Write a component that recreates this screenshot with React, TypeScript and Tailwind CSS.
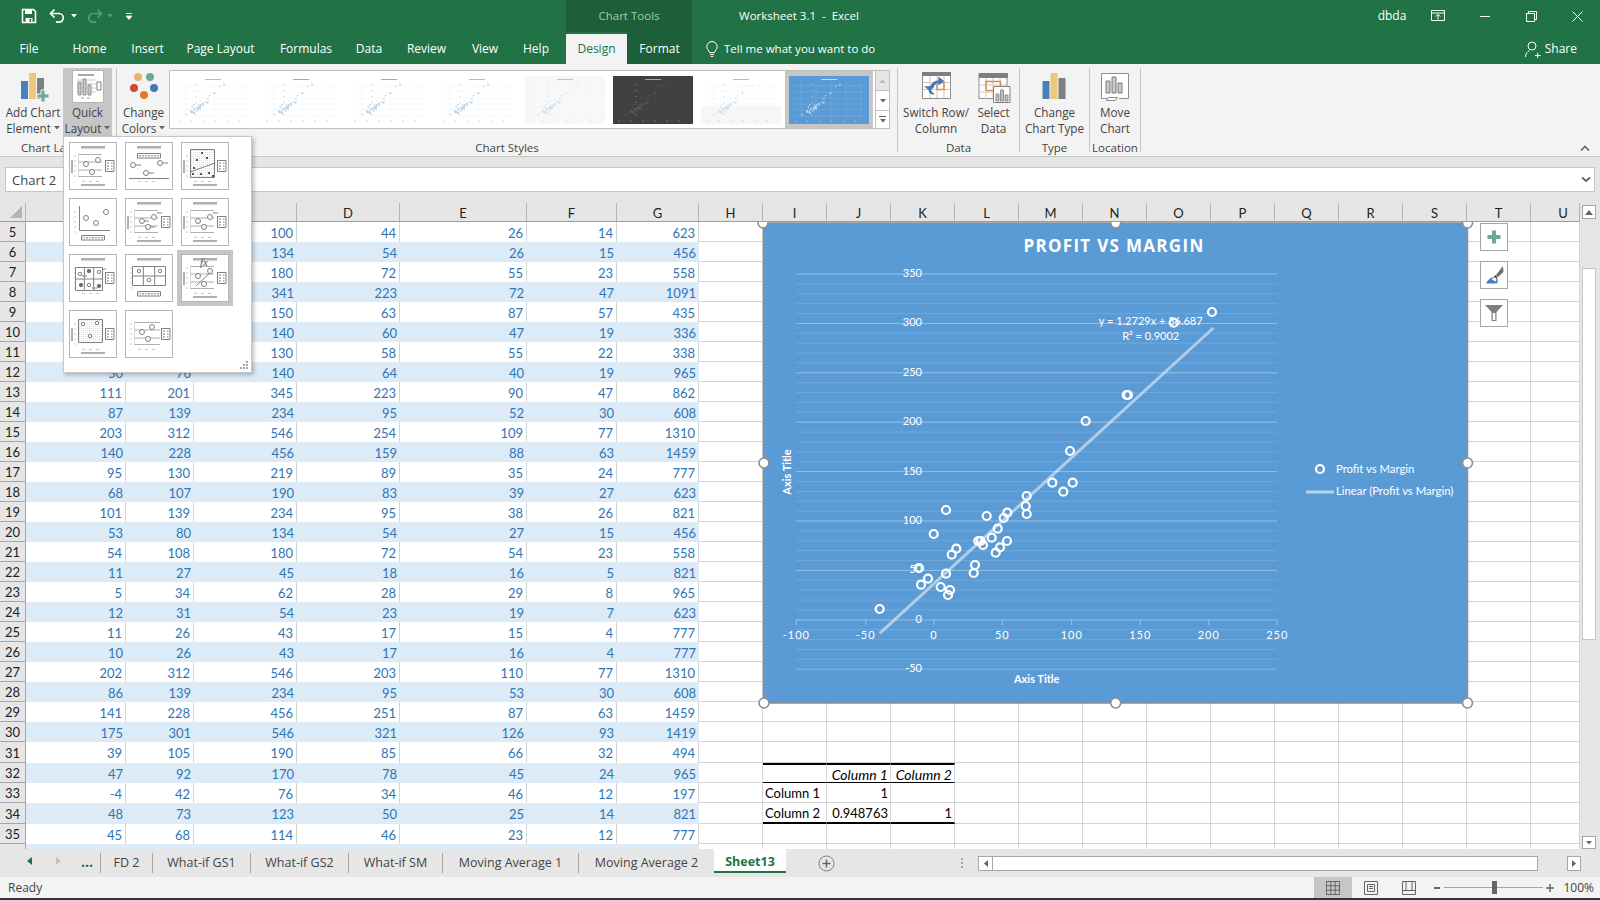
import type { ReactNode } from 'react';

const COLS = [100, 68, 103, 103, 127, 90, 82];
const LETTERS = 'ABCDEFG'.split('');

const WIDTH_CLASS: Record<number, string> = {
  100: 'w-[100px]',
  68: 'w-[68px]',
  103: 'w-[103px]',
  127: 'w-[127px]',
  90: 'w-[90px]',
  82: 'w-[82px]',
};

const GRID_COLS = ['H', 'I', 'J', 'K', 'L', 'M', 'N', 'O', 'P', 'Q', 'R', 'S', 'T', 'U'];

// rows 5..36, columns A..G. The first ones sit behind the quick layout menu
const DATA: (string | number)[][] = [
  ['', '', 100, 44, 26, 14, 623],
  ['', '', 134, 54, 26, 15, 456],
  ['', '', 180, 72, 55, 23, 558],
  ['', '', 341, 223, 72, 47, 1091],
  ['', '', 150, 63, 87, 57, 435],
  ['', '', 140, 60, 47, 19, 336],
  ['', '', 130, 58, 55, 22, 338],
  [50, 76, 140, 64, 40, 19, 965],
  [111, 201, 345, 223, 90, 47, 862],
  [87, 139, 234, 95, 52, 30, 608],
  [203, 312, 546, 254, 109, 77, 1310],
  [140, 228, 456, 159, 88, 63, 1459],
  [95, 130, 219, 89, 35, 24, 777],
  [68, 107, 190, 83, 39, 27, 623],
  [101, 139, 234, 95, 38, 26, 821],
  [53, 80, 134, 54, 27, 15, 456],
  [54, 108, 180, 72, 54, 23, 558],
  [11, 27, 45, 18, 16, 5, 821],
  [5, 34, 62, 28, 29, 8, 965],
  [12, 31, 54, 23, 19, 7, 623],
  [11, 26, 43, 17, 15, 4, 777],
  [10, 26, 43, 17, 16, 4, 777],
  [202, 312, 546, 203, 110, 77, 1310],
  [86, 139, 234, 95, 53, 30, 608],
  [141, 228, 456, 251, 87, 63, 1459],
  [175, 301, 546, 321, 126, 93, 1419],
  [39, 105, 190, 85, 66, 32, 494],
  [47, 92, 170, 78, 45, 24, 965],
  [-4, 42, 76, 34, 46, 12, 197],
  [48, 73, 123, 50, 25, 14, 821],
  [45, 68, 114, 46, 23, 12, 777],
  ['', '', '', '', '', '', ''],
];

// scatter points in page pixels
const POINTS = [
  [1212, 312], [1173.7, 322.7], [1126.7, 395], [1128, 395], [1085.7, 421], [1070, 451],
  [1052.3, 482.7], [1072.7, 482.7], [1063.3, 491.7], [1026.7, 496], [1025.7, 506], [1026.7, 514],
  [946, 510], [986.7, 516], [1007.3, 512.7], [1003.7, 518], [997.7, 528.7], [933.7, 534],
  [991.7, 537.7], [1007, 541], [978.3, 541], [980.7, 541], [983, 545], [956.3, 548.7],
  [951.7, 554.7], [1000, 547.3], [995.7, 552.7], [975, 565], [973.7, 573], [919, 568],
  [946, 573.7], [928, 578.7], [921, 584.7], [940.7, 587], [950, 590], [948, 595], [879.7, 609],
];

function Caret({ color = '#666' }: { color?: string }) {
  return (
    <svg width="6" height="4" viewBox="0 0 6 4" className="inline-block">
      <path d="M0 0h6L3 3.5z" fill={color} />
    </svg>
  );
}

function TitleBar() {
  return (
    <div className="flex h-[32px] bg-[#217346] text-[11.5px] text-white">
      <div className="flex w-[566px] items-center">
        <svg width="16" height="16" viewBox="0 0 16 16" className="ml-[21px]">
          <path d="M1.5 1.5h11l2 2v11h-13z" fill="none" stroke="#fff" strokeWidth="1.6" />
          <path d="M4 1.5h7v4.5H4zM4.5 10h7v4.5h-7z" fill="#fff" />
          <path d="M8.5 11h1.6v3H8.5z" fill="#217346" />
        </svg>
        <svg width="18" height="16" viewBox="0 0 18 16" className="ml-[12px]">
          <path d="M5.5 1.5 1.5 5.5l4 4" fill="none" stroke="#fff" strokeWidth="1.7" />
          <path d="M2 5.5h8a4.3 4.3 0 0 1 0 8.6H7" fill="none" stroke="#fff" strokeWidth="1.7" />
        </svg>
        <span className="ml-[4px] flex"><Caret color="#fff" /></span>
        <svg width="18" height="16" viewBox="0 0 18 16" className="ml-[8px] opacity-40">
          <path d="M12.5 1.5l4 4-4 4" fill="none" stroke="#b7d5c3" strokeWidth="1.7" />
          <path d="M16 5.5H8a4.3 4.3 0 0 0 0 8.6h3" fill="none" stroke="#b7d5c3" strokeWidth="1.7" />
        </svg>
        <span className="ml-[4px] flex opacity-40"><Caret color="#b7d5c3" /></span>
        <svg width="6" height="7" viewBox="0 0 6 7" className="ml-[13px]">
          <path d="M0 .5h6M0 3h6l-3 3.5z" fill="#fff" stroke="#fff" strokeWidth=".8" />
        </svg>
      </div>
      <div className="flex w-[126px] items-center justify-center bg-[#1c5f39] text-[#a8cbb6]">Chart Tools</div>
      <div className="flex w-[214px] items-center justify-center whitespace-pre">Worksheet 3.1  -  Excel</div>
      <div className="ml-auto flex">
        <div className="flex w-[44px] items-center justify-center text-[12px]">dbda</div>
        <div className="flex w-[48px] items-center justify-center">
          <svg width="14" height="12" viewBox="0 0 14 12">
            <path d="M.5.5h13v10H.5zM.5 3h13M7 9.5V4.5M4.8 6.5 7 4.3l2.2 2.2" fill="none" stroke="#fff" />
          </svg>
        </div>
        <div className="flex w-[46px] items-center justify-center">
          <div className="h-px w-[10px] bg-white" />
        </div>
        <div className="flex w-[46px] items-center justify-center">
          <svg width="11" height="11" viewBox="0 0 11 11">
            <path d="M.5 2.5h8v8h-8zM2.5 2.5v-2h8v8h-2" fill="none" stroke="#fff" />
          </svg>
        </div>
        <div className="flex w-[46px] items-center justify-center">
          <svg width="11" height="11" viewBox="0 0 11 11">
            <path d="M.5.5l10 10M10.5.5l-10 10" fill="none" stroke="#fff" />
          </svg>
        </div>
      </div>
    </div>
  );
}

function TabBar() {
  const tabs = [
    ['File', 'w-[58px]'],
    ['Home', 'w-[63px]'],
    ['Insert', 'w-[53px]'],
    ['Page Layout', 'w-[93px]'],
    ['Formulas', 'w-[78px]'],
    ['Data', 'w-[48px]'],
    ['Review', 'w-[67px]'],
    ['View', 'w-[50px]'],
    ['Help', 'w-[52px]'],
  ];
  return (
    <div className="flex h-[32px] bg-[#217346] text-[12px] text-white">
      {tabs.map(([name, w]) => (
        <div key={name} className={`flex items-center justify-center pt-[2px] ${w}`}>{name}</div>
      ))}
      <div className="w-[4px]" />
      <div className="mt-[2px] flex w-[61px] items-center justify-center bg-[#f3f3f3] text-[#217346]">Design</div>
      <div className="flex w-[65px] items-center justify-center bg-[#1c5f39] pt-[2px]">Format</div>
      <div className="ml-[14px] flex items-center pt-[2px]">
        <svg width="12" height="17" viewBox="0 0 12 17">
          <path d="M3.5 11.5C3 9.5.8 8.5.8 5.7a5.2 5.2 0 0 1 10.4 0c0 2.8-2.2 3.8-2.7 5.8zM4 13.500h4M4.800 15.500h2.400" fill="none" stroke="#fff" />
        </svg>
        <span className="ml-[6px] text-[11.5px]">Tell me what you want to do</span>
      </div>
      <div className="ml-auto flex items-center pr-[23px] pt-[2px]">
        <svg width="16" height="17" viewBox="0 0 16 17">
          <circle cx="7" cy="5" r="4" fill="none" stroke="#fff" />
          <path d="M.5 16c0-3.500 2-5.500 4-6.300M10 14.500h5.500M12.700 11.700v5.500" fill="none" stroke="#fff" />
        </svg>
        <span className="ml-[4px]">Share</span>
      </div>
    </div>
  );
}

function RibbonButton({ w, icon, lines, caret, active }: { w: string; icon: ReactNode; lines: string[]; caret?: boolean; active?: boolean }) {
  return (
    <div className={`flex h-[72px] flex-col items-center ${w} ${active ? 'bg-[#c6c6c6]' : ''}`}>
      <div className="flex h-[36px] items-start justify-center pt-[2px]">{icon}</div>
      <div className="text-center text-[11.7px] leading-[16px] text-[#444] whitespace-nowrap">
        <div>{lines[0]}</div>
        <div className="flex items-center justify-center gap-[3px]">
          <span>{lines[1]}</span>
          {caret && <Caret />}
        </div>
      </div>
    </div>
  );
}

function Group({ w, label, children }: { w: string; label: string; children: ReactNode }) {
  return (
    <div className={`flex h-[88px] flex-col ${w}`}>
      <div className="flex h-[72px]">{children}</div>
      <div className="flex h-[16px] items-center justify-center text-[11.5px] text-[#444] whitespace-nowrap">{label}</div>
    </div>
  );
}

function Separator() {
  return <div className="h-[84px] w-px bg-[#c6c6c6]" />;
}

const AddChartIcon = (
  <svg width="32" height="34" viewBox="0 0 32 34">
    <path d="M4 11h7v18H4z" fill="#4a7fb8" />
    <path d="M12 3h7v26h-7z" fill="#eec77f" />
    <path d="M20 8h7v21h-7z" fill="#7f7f7f" />
    <path d="M24 20h4v4h4v4h-4v4h-4v-4h-4v-4h4z" fill="#6fa894" stroke="#f3f3f3" />
  </svg>
);

const QuickLayoutIcon = (
  <svg width="32" height="33" viewBox="0 0 32 33">
    <path d="M.5.5h31v32H.5z" fill="#fff" stroke="#b5b5b5" />
    <path d="M6 4h16v2H6z" fill="#a6a6a6" />
    <path d="M5 10h19M5 14h19M5 18h19M5 22h19" stroke="#c8c8c8" />
    <path d="M6 12h3v13H6z M11 9h3v16h-3z M16 15h3v10h-3z" fill="#c8c8c8" stroke="#7f7f7f" strokeWidth=".8" />
    <path d="M25 12h4v8h-4z" fill="#fff" stroke="#7f7f7f" />
    <path d="M9 28h3M15 28h3" stroke="#a6a6a6" />
  </svg>
);

const ColorsIcon = (
  <svg width="32" height="34" viewBox="0 0 32 34">
    <circle cx="10" cy="7" r="4" fill="#eeb26b" />
    <circle cx="22" cy="7" r="4" fill="#6fa593" />
    <circle cx="6" cy="18" r="4" fill="#d2472f" />
    <circle cx="26" cy="18" r="4" fill="#3f78b8" />
    <circle cx="16" cy="25" r="4" fill="#e97620" />
  </svg>
);

const SwitchIcon = (
  <svg width="32" height="30" viewBox="0 0 32 30">
    <path d="M2.500 2.500h28v26h-28z" fill="#fff" stroke="#8c8c8c" />
    <path d="M2 2h29v4H2z" fill="#7f7f7f" />
    <path d="M2.500 12.500h28M2.500 19.500h28M10 6v22M17 6v22M24 6v22" stroke="#c8c8c8" />
    <path d="M17 12.500h7v7h-7z" fill="none" stroke="#e08a3c" strokeWidth="1.400" />
    <path d="M10 20a9 9 0 0 1 9-9M19 8v6l4-3zM9 18c0 4 2 6 5 6M6 17h7l-3 3z" fill="#3f78b8" stroke="#3f78b8" strokeWidth="1.400" />
  </svg>
);

const SelectDataIcon = (
  <svg width="34" height="34" viewBox="0 0 34 34">
    <path d="M2 3.500h28v25H2z" fill="#fff" stroke="#8c8c8c" />
    <path d="M2 3h29v5H2z" fill="#7f7f7f" />
    <path d="M2 15h28M2 22h28M9 8v21M16 8v21M23 8v21" stroke="#c8c8c8" />
    <path d="M9 20V11.500h14.500V16" fill="none" stroke="#e08a3c" strokeWidth="1.400" />
    <path d="M9 20.500h7" stroke="#e08a3c" strokeWidth="1.400" />
    <path d="M16.500 16.500h16.500v16H16.500z" fill="#fff" stroke="#7f7f7f" />
    <path d="M19 24h3v7h-3zM23.500 20h3v11h-3zM28 25h3v6h-3z" fill="#bfbfbf" stroke="#7f7f7f" strokeWidth=".8" />
  </svg>
);

const ChangeTypeIcon = (
  <svg width="32" height="34" viewBox="0 0 32 34">
    <path d="M3.500 11h7v18h-7z" fill="#4a7fb8" />
    <path d="M11.500 3h7v26h-7z" fill="#eec77f" />
    <path d="M19.500 8h7v21h-7z" fill="#7f7f7f" />
  </svg>
);

const MoveChartIcon = (
  <svg width="32" height="34" viewBox="0 0 32 34">
    <path d="M9 28.500H2.500v-25h27v25H20" fill="#fff" stroke="#8c8c8c" />
    <path d="M9.500 27.500h9l-2 3h-9z" fill="#fff" stroke="#8c8c8c" />
    <path d="M7 11h4v12H7zM13 7h4v16h-4zM19 13h4v10h-4z" fill="#c8c8c8" stroke="#7f7f7f" />
  </svg>
);

function ChartThumb({ bg, dot, grid, title, bottom }: { bg: string; dot: string; grid: string; title: string; bottom?: string }) {
  const gridLines = [6, 12, 18, 24, 30, 36];
  const xLines = [12, 27, 42, 57, 72];
  return (
    <svg width="80" height="48" viewBox="0 0 80 48" className="shrink-0">
      <rect width="80" height="48" fill={bg} />
      {bottom && <rect y="30" width="80" height="18" fill={bottom} />}
      {gridLines.map((y) => <path key={y} d={`M4 ${y + 4}H76`} stroke={grid} strokeWidth=".5" />)}
      {xLines.map((x) => <path key={x} d={`M${x} 7V42`} stroke={grid} strokeWidth=".5" />)}
      <rect x="32" y="3" width="16" height="1" fill={title} opacity=".65" />
      <path d="M5 45h2M17 45h2M29 45h2M41 45h2M53 45h2M65 45h2" stroke={title} strokeWidth=".6" opacity=".45" />
      <path d="M23 8v1M23 14v1M23 20v1M23 26v1M23 32v1M23 38v1" stroke={title} strokeWidth="1" opacity=".5" />
      {POINTS.map(([x, y], i) => (
        <circle key={i} cx={(x - 763) * 0.1136} cy={(y - 223) * 0.1} r=".8" fill={dot} />
      ))}
    </svg>
  );
}

function Gallery() {
  return (
    <div className="mt-[2px] flex h-[59px]">
      <div className="flex w-[707px] gap-[8px] border border-[#bfbfbf] bg-white pl-[3px] pt-[5px]">
        <ChartThumb bg="#fff" dot="#a9cbe9" grid="#f0f0f0" title="#999" />
        <ChartThumb bg="#fff" dot="#a9cbe9" grid="#f0f0f0" title="#777" />
        <ChartThumb bg="#fff" dot="#a9cbe9" grid="#f0f0f0" title="#777" />
        <ChartThumb bg="#fff" dot="#a9cbe9" grid="#f0f0f0" title="#999" />
        <ChartThumb bg="#f7f7f7" dot="#c6dcf0" grid="#fff" title="#aaa" />
        <ChartThumb bg="#404040" dot="#5d5d5d" grid="#4a4a4a" title="#ddd" />
        <ChartThumb bg="#fff" bottom="#f6f6f6" dot="#c6dcf0" grid="#f0f0f0" title="#999" />
        <div className="-mt-[5px] -ml-[4px] h-[57px] border-y-[5px] border-x-[4px] border-[#c6c6c6]">
          <ChartThumb bg="#5b9bd5" dot="#bfd9f0" grid="#7fb2e0" title="#fff" />
        </div>
      </div>
      <div className="flex w-[14px] flex-col">
        <div className="flex h-[21px] items-center justify-center border border-l-0 border-[#bfbfbf] bg-[#e6e6e6]">
          <svg width="7" height="4" viewBox="0 0 7 4"><path d="M3.500 0 7 4H0z" fill="#c0c0c0" /></svg>
        </div>
        <div className="flex h-[19px] items-center justify-center border-r border-[#bfbfbf] bg-white">
          <Caret />
        </div>
        <div className="flex h-[19px] flex-col items-center justify-center gap-[2px] border border-l-0 border-[#bfbfbf] bg-white">
          <div className="h-px w-[7px] bg-[#666]" />
          <Caret />
        </div>
      </div>
    </div>
  );
}

function Ribbon() {
  return (
    <div className="flex h-[93px] border-b border-[#c6c6c6] bg-[#f3f3f3] pt-[4px]">
      <Group w="w-[116px]" label="Chart Layouts">
        <div className="w-[3px]" />
        <RibbonButton w="w-[60px]" icon={AddChartIcon} lines={['Add Chart', 'Element']} caret />
        <RibbonButton w="w-[49px]" icon={QuickLayoutIcon} lines={['Quick', 'Layout']} caret active />
      </Group>
      <Separator />
      <Group w="w-[780px]" label="Chart Styles">
        <div className="w-[1px]" />
        <RibbonButton w="w-[51px]" icon={ColorsIcon} lines={['Change', 'Colors']} caret />
        <Gallery />
      </Group>
      <Separator />
      <Group w="w-[121px]" label="Data">
        <RibbonButton w="w-[76px]" icon={SwitchIcon} lines={['Switch Row/', 'Column']} />
        <RibbonButton w="w-[39px]" icon={SelectDataIcon} lines={['Select', 'Data']} />
      </Group>
      <Separator />
      <Group w="w-[69px]" label="Type">
        <RibbonButton w="w-[69px]" icon={ChangeTypeIcon} lines={['Change', 'Chart Type']} />
      </Group>
      <Separator />
      <Group w="w-[50px]" label="Location">
        <RibbonButton w="w-[50px]" icon={MoveChartIcon} lines={['Move', 'Chart']} />
      </Group>
      <Separator />
      <div className="flex flex-1 items-end justify-end pb-[5px] pr-[10px]">
        <svg width="10" height="6" viewBox="0 0 10 6">
          <path d="M1 5.500 5 1.500l4 4" fill="none" stroke="#666" strokeWidth="1.600" />
        </svg>
      </div>
    </div>
  );
}

function FormulaBar() {
  return (
    <div className="h-[46px] bg-[#e6e6e6] pl-[5px] pr-[5px] pt-[10px]">
      <div className="flex h-[25px] items-center justify-between border border-[#c6c6c6] bg-white pl-[6px] pr-[3px] text-[13px] text-[#444]">
        <span className="pt-[2px]">Chart 2</span>
        <svg width="10" height="7" viewBox="0 0 10 7">
          <path d="M1 1.500 5 5l4-3.500" fill="none" stroke="#666" strokeWidth="1.800" />
        </svg>
      </div>
    </div>
  );
}

function ColumnHeaders() {
  const headerCell = 'flex h-full items-center justify-center border-r border-[#b5b5b5] pt-[3px]';
  return (
    <div className="flex h-[19px] border-b border-[#9c9c9c] bg-[#e6e6e6] font-['Lato',sans-serif] text-[13px] text-[#222]">
      <div className="flex h-full w-[26px] items-end justify-end border-r border-[#b5b5b5] pb-[3px] pr-[3px]">
        <svg width="12" height="12" viewBox="0 0 12 12"><path d="M12 0v12H0z" fill="#b5b5b5" /></svg>
      </div>
      {COLS.map((w, i) => (
        <div key={LETTERS[i]} className={`${headerCell} ${WIDTH_CLASS[w]}`}>{LETTERS[i]}</div>
      ))}
      {GRID_COLS.map((c) => (
        <div key={c} className={`${headerCell} ${c === 'U' ? 'flex-1 pl-[16px]' : 'w-[64px]'}`}>{c}</div>
      ))}
    </div>
  );
}

function correlCell(row: number, col: string) {
  if (row === 32 && col === 'J') return 'Column 1';
  if (row === 32 && col === 'K') return 'Column 2';
  if (row === 33 && col === 'I') return 'Column 1';
  if (row === 33 && col === 'J') return '1';
  if (row === 34 && col === 'I') return 'Column 2';
  if (row === 34 && col === 'J') return '0.948763';
  if (row === 34 && col === 'K') return '1';
  return '';
}

function SheetRow({ n, values }: { n: number; values: (string | number)[] }) {
  const banded = n % 2 === 0;
  const tall = n === 31 || n === 34;
  const inTable = n >= 32 && n <= 34;
  return (
    <div className={`flex shrink-0 font-['Lato',sans-serif] text-[13px] ${tall ? 'h-[21px]' : 'h-[20px]'}`}>
      <div className="flex w-[26px] items-center justify-center border-r border-b border-[#a6a6a6] bg-[#e6e6e6] pt-[3px] text-[#222]">{n < 36 ? n : ''}</div>
      {values.map((v, i) => (
        <div
          key={i}
          className={`flex items-center justify-end pr-[3px] pt-[3px] text-[#2e75b6] ${WIDTH_CLASS[COLS[i]]} ${
            banded ? 'bg-[#ddebf7]' : 'border-r border-[#d4d4d4] bg-white'
          }`}
        >
          {v}
        </div>
      ))}
      {GRID_COLS.map((c) => {
        const tableCol = inTable && (c === 'I' || c === 'J' || c === 'K');
        const text = correlCell(n, c);
        return (
          <div
            key={c}
            className={`flex items-center border-r border-[#d4d4d4] pr-[2px] pt-[2px] text-black ${c === 'U' ? 'flex-1' : 'w-[64px]'} ${
              c === 'I' ? 'justify-start pl-[2px]' : 'justify-end'
            } ${n === 32 && tableCol ? 'border-t-2 border-t-black border-b border-b-black text-[14px] italic' : ''} ${
              n === 33 && tableCol ? 'border-b border-b-[#d4d4d4]' : ''
            } ${n === 34 && tableCol ? 'border-b-2 border-b-black' : ''} ${!tableCol ? 'border-b border-b-[#d4d4d4]' : ''}`}
          >
            {text}
          </div>
        );
      })}
    </div>
  );
}

function ProfitChart() {
  const majors = [274, 323.4, 372.8, 422.2, 471.6, 521, 570.4, 620, 669.2];
  const yLabels = ['350', '300', '250', '200', '150', '100', '50', '0', '-50'];
  const minors: number[] = [];
  for (let y = 274; y < 669; y += 9.88) minors.push(y);
  const xTicks = [796.3, 865.7, 934, 1002.3, 1071.7, 1140.3, 1208.7, 1277.3];
  const xLabels = ['-100', '-50', '0', '50', '100', '150', '200', '250'];
  const handles = [
    [763, 223], [1115.700, 223], [1467.500, 223], [764, 463], [1467.500, 463], [764, 703], [1115.700, 703], [1467.500, 703],
  ];
  return (
    <svg width="720" height="496" viewBox="755 215 720 496" className="font-['Lato',sans-serif]">
      <rect x="763.500" y="223" width="704" height="480" fill="#5b9bd5" stroke="#8e8e8e" strokeWidth="1.500" />
      {minors.map((y) => <path key={y} d={`M796 ${y}H1277`} stroke="#fff" strokeOpacity=".13" />)}
      {majors.map((y) => <path key={y} d={`M796 ${y}H1277`} stroke="#fff" strokeOpacity=".28" />)}
      {xTicks.map((x) => <path key={x} d={`M${x} 620v5`} stroke="#fff" strokeOpacity=".4" />)}
      <text x="1114" y="251.500" textAnchor="middle" fill="#fff" fontSize="17" fontWeight="700" letterSpacing="1.300" fontFamily="'Open Sans',sans-serif">PROFIT VS MARGIN</text>
      {yLabels.map((t, i) => (
        <text key={t} x="922" y={majors[i] + 3} textAnchor="end" fill="#fff" fontSize="11">{t}</text>
      ))}
      {xLabels.map((t, i) => (
        <text key={t} x={xTicks[i]} y="639" textAnchor="middle" fill="#fff" fontSize="11" letterSpacing="1">{t}</text>
      ))}
      <path d="M879.700 633.300 1213.300 328" stroke="#fff" strokeOpacity=".5" strokeWidth="3" />
      {POINTS.map(([x, y], i) => (
        <circle key={i} cx={x} cy={y} r="4" fill="none" stroke="#fff" strokeWidth="2.200" />
      ))}
      <text x="1150.700" y="324.500" textAnchor="middle" fill="#fff" fontSize="11">y = 1.2729x + 36.687</text>
      <text x="1150.700" y="339.500" textAnchor="middle" fill="#fff" fontSize="11">R² = 0.9002</text>
      <text x="0" y="0" transform="translate(790.500 472) rotate(-90)" textAnchor="middle" fill="#fff" fontSize="11" fontWeight="700">Axis Title</text>
      <text x="1036.700" y="683" textAnchor="middle" fill="#fff" fontSize="11" fontWeight="700">Axis Title</text>
      <circle cx="1320" cy="469" r="4" fill="none" stroke="#fff" strokeWidth="2.200" />
      <text x="1336" y="473" fill="#fff" fontSize="11.300">Profit vs Margin</text>
      <path d="M1306 492H1334" stroke="#fff" strokeOpacity=".55" strokeWidth="3" />
      <text x="1336" y="495" fill="#fff" fontSize="11.300">Linear (Profit vs Margin)</text>
      {handles.map(([x, y]) => (
        <circle key={`${x}-${y}`} cx={x} cy={y} r="5" fill="#fff" stroke="#8e8e8e" strokeWidth="1.600" />
      ))}
    </svg>
  );
}

function ChartButtons() {
  const box = 'flex h-[28px] w-[28px] items-center justify-center border border-[#a6a6a6] bg-white';
  return (
    <div className="absolute left-[1480px] top-[1px] flex flex-col gap-[10px]">
      <div className={box}>
        <svg width="16" height="16" viewBox="0 0 16 16"><path d="M6 1.500h4V6h4.500v4H10v4.500H6V10H1.500V6H6z" fill="#6fa894" /></svg>
      </div>
      <div className={box}>
        <svg width="20" height="20" viewBox="0 0 20 20">
          <path d="M19 1l.5 6-5.500 5-2-2z" fill="#6e6e6e" />
          <path d="M11.500 10l2 2-1.500 2-2.500-2z" fill="#444" />
          <path d="M9.500 12c-3.500.5-5.500 3-7.500 6.500h10.500c1.500-1 1.500-3 1-5z" fill="#4a7fb8" />
          <path d="M8 14.500a2.200 2.200 0 1 1 3.500 2" fill="#fff" />
        </svg>
      </div>
      <div className={box}>
        <svg width="20" height="18" viewBox="0 0 20 18">
          <path d="M1 1h18l-6.500 7v9h-5V8z" fill="#7f7f7f" />
          <path d="M8.700 9h2.600v7H8.700z" fill="#fff" />
        </svg>
      </div>
    </div>
  );
}

function Sheet() {
  return (
    <div className="flex h-[646px]">
      <div className="flex w-[1580px] flex-col">
        <ColumnHeaders />
        <div className="relative h-[627px] overflow-hidden bg-white">
          {DATA.map((values, i) => (
            <SheetRow key={i} n={i + 5} values={values} />
          ))}
          <div className="absolute left-[755px] top-[-7px]">
            <ProfitChart />
          </div>
          <ChartButtons />
        </div>
      </div>
      <div className="flex w-[20px] flex-col bg-[#e6e6e6] pl-[2px] pr-[4px] pt-[2px]">
        <div className="flex h-[14px] items-center justify-center border border-[#a6a6a6] bg-white">
          <svg width="8" height="5" viewBox="0 0 8 5"><path d="M4 0l4 5H0z" fill="#666" /></svg>
        </div>
        <div className="mt-[49px] h-[372px] border border-[#c6c6c6] bg-white" />
        <div className="mt-auto flex h-[13px] items-center justify-center border border-[#a6a6a6] bg-white">
          <Caret />
        </div>
      </div>
    </div>
  );
}

type Pt = [number, number];

type LayoutProps = {
  title?: boolean;
  yt?: boolean;
  legend?: boolean;
  xt?: boolean;
  pts?: Pt[];
  r?: number;
  grid?: 'lines' | 'box' | 'dotted' | 'none' | 'axes';
  plot?: [number, number, number, number];
  dashes?: string;
  solid?: Pt[];
  squares?: Pt[];
  trend?: string;
  fx?: boolean;
  infoBox?: number;
  selected?: boolean;
};

const DEFAULT_PTS: Pt[] = [[17, 22], [29, 18], [23, 30]];

function LayoutThumb({ title, yt, legend, xt, pts = DEFAULT_PTS, r = 2.500, grid = 'lines', plot = [9, 12, 33, 35], dashes, solid, squares, trend, fx, infoBox, selected }: LayoutProps) {
  const [x1, y1, x2, y2] = plot;
  const dots: Pt[] = [];
  if (grid === 'dotted') {
    for (let x = x1 + 1; x < x2; x += 2) for (let y = y1 + 1; y < y2; y += 2) dots.push([x, y]);
  }
  const midX = [x1 + (x2 - x1) / 3, x1 + (2 * (x2 - x1)) / 3];
  const midY = [y1 + (y2 - y1) / 2];
  const ys = [y1 + 0.5, y1 + 8, y1 + 16, y2 - 0.5];
  return (
    <div className={`h-[48px] w-[48px] border border-[#b5b5b5] bg-white ${selected ? 'outline-4 outline-[#c6c6c6]' : ''}`}>
      <svg width="46" height="46" viewBox="1 1 46 46">
        {title && <path d="M12 4h24v2.500H12z" fill="#b0b0b0" />}
        {yt && <path d="M2 18h2v13H2z" fill="#b0b0b0" />}
        {grid !== 'none' && [14, 19, 24, 29, 34].map((y) => <path key={y} d={`M5 ${y}h2`} stroke="#c8c8c8" />)}
        {dots.map(([x, y]) => <rect key={`${x}-${y}`} x={x} y={y} width=".7" height=".7" fill="#bbb" />)}
        {grid === 'lines' && ys.map((y) => <path key={y} d={`M${x1} ${y}H${x2}`} stroke="#b0b0b0" />)}
        {grid === 'lines' && <path d={`M${x1 + 0.5} ${y1}V${y2}`} stroke="#d4d4d4" />}
        {(grid === 'box' || grid === 'dotted') && <path d={`M${x1 + 0.5} ${y1 + 0.5}H${x2 - 0.5}V${y2 - 0.5}H${x1 + 0.5}z`} fill="none" stroke="#808080" />}
        {grid === 'box' && midX.map((x) => <path key={x} d={`M${x} ${y1}V${y2}`} stroke="#808080" />)}
        {grid === 'box' && midY.map((y) => <path key={y} d={`M${x1} ${y}H${x2}`} stroke="#808080" />)}
        {grid === 'none' && <path d={`M${x1} ${y2 + 0.5}H${x2}`} stroke="#808080" />}
        {grid === 'axes' && <path d={`M${x1 + 0.5} ${y1}V${y2 + 0.5}H${x2}`} fill="none" stroke="#808080" />}
        {trend && <path d={trend} stroke="#808080" />}
        {squares?.map(([x, y]) => <rect key={`${x}-${y}`} x={x} y={y} width="2" height="2" fill="#555" />)}
        {pts.map(([x, y], i) => <circle key={i} cx={x} cy={y} r={r} fill="#fff" stroke="#808080" />)}
        {solid?.map(([x, y], i) => <circle key={i} cx={x} cy={y} r={r} fill="#707070" stroke="#707070" />)}
        {dashes && <path d={dashes} stroke="#808080" />}
        {fx && <text x="19" y="12" fontSize="11" fontStyle="italic" fontFamily="'Liberation Serif',serif" fill="#555">fx</text>}
        {legend && <path d="M36.500 18.500h8.500v11h-8.500z" fill="#fff" stroke="#808080" />}
        {legend && <path d="M38 21h2M42 21h1.500M38 24h2M42 24h1.500M38 27h2M42 27h1.500" stroke="#808080" />}
        {infoBox !== undefined && <path d={`M12.500 ${infoBox + 0.5}h23v4.500h-23z`} fill="#fff" stroke="#808080" />}
        {infoBox !== undefined && <path d={`M14 ${infoBox + 2.8}h20`} stroke="#808080" strokeDasharray="2 1" />}
        <path d="M13 39.500h3M20 39.500h3M27 39.500h3" stroke="#c8c8c8" />
        {xt && <path d="M12 42h24v2H12z" fill="#b0b0b0" />}
      </svg>
    </div>
  );
}

function QuickLayoutMenu() {
  return (
    <div className="absolute left-[63px] top-[136px] h-[237px] w-[189px] border border-[#c6c6c6] bg-white pl-[5px] pt-[5px] shadow-[2px_2px_4px_rgba(0,0,0,0.25)]">
      <div className="grid grid-cols-[48px_48px_48px] gap-[8px]">
        <LayoutThumb title yt legend xt />
        <LayoutThumb title grid="none" plot={[4, 12, 44, 36]} infoBox={11} pts={[[8, 23], [35, 21], [21, 31]]} dashes="M11 23h5M38 21h5M24 31h5" />
        <LayoutThumb yt legend xt grid="dotted" plot={[9, 7, 34, 36]} trend="M9 30 34 21" squares={[[12, 25], [20, 10], [25, 15], [11, 31], [19, 31], [27, 30], [31, 33], [15, 17]]} pts={[]} />
        <LayoutThumb grid="axes" plot={[10, 8, 41, 32]} infoBox={37} pts={[[17, 20], [37, 14], [27, 25]]} />
        <LayoutThumb title yt legend xt pts={[[17, 23], [29, 19], [23, 29]]} dashes="M20 23h4M32 15h5M26 29h4" />
        <LayoutThumb title yt legend xt pts={[[17, 23], [29, 19], [23, 29]]} dashes="M32 15h5" />
        <LayoutThumb title legend grid="box" plot={[6, 13, 34, 37]} r={1.700} pts={[[11, 20], [30, 18], [20, 31]]} solid={[[20, 17], [12, 31], [30, 32]]} dashes="M13 22h5M23 34h5M33 15h4" />
        <LayoutThumb title grid="box" plot={[7, 12, 41, 32]} r={1.700} infoBox={37} pts={[[14, 17], [35, 17], [24, 26]]} />
        <LayoutThumb title yt legend xt fx trend="M15 32 32 16" selected pts={[[17, 22], [29, 17], [23, 30]]} />
        <LayoutThumb yt legend xt grid="dotted" plot={[9, 9, 34, 33]} r={1.700} pts={[[14, 14], [28, 13], [21, 26]]} />
        <LayoutThumb legend plot={[9, 12, 35, 35]} pts={[[17, 22], [27, 17], [23, 29]]} />
      </div>
      <svg width="8" height="8" viewBox="0 0 8 8" className="absolute bottom-[3px] right-[3px]">
        <path d="M6 0h2v2H6zM3 3h2v2H3zM6 3h2v2H6zM0 6h2v2H0zM3 6h2v2H3zM6 6h2v2H6z" fill="#a6a6a6" />
      </svg>
    </div>
  );
}

function SheetTabs() {
  const tabs = [
    ['FD 2', 'w-[52px]'],
    ['What-if GS1', 'w-[98px]'],
    ['What-if GS2', 'w-[98px]'],
    ['What-if SM', 'w-[94px]'],
    ['Moving Average 1', 'w-[136px]'],
    ['Moving Average 2', 'w-[136px]'],
  ];
  return (
    <div className="flex h-[28px] items-start bg-[#e6e6e6] text-[12.5px] text-[#444]">
      <div className="flex h-[24px] w-[100px] items-center pl-[27px]">
        <svg width="5" height="8" viewBox="0 0 5 8"><path d="M5 0v8L0 4z" fill="#217346" /></svg>
        <svg width="5" height="8" viewBox="0 0 5 8" className="ml-[24px]"><path d="M0 0v8l5-4z" fill="#c0c0c0" /></svg>
        <span className="ml-[20px] text-[14px] font-bold text-[#217346]">...</span>
      </div>
      {tabs.map(([name, w]) => (
        <div key={name} className={`mt-[4px] flex h-[20px] items-center justify-center border-l border-[#a6a6a6] ${w}`}>{name}</div>
      ))}
      <div className="flex h-[24px] w-[72px] items-center justify-center border-b-2 border-[#217346] bg-white pt-[5px] font-bold text-[#217346]">Sheet13</div>
      <div className="ml-[32px] mt-[6px]">
        <svg width="17" height="17" viewBox="0 0 17 17">
          <circle cx="8.500" cy="8.500" r="7.500" fill="none" stroke="#808080" />
          <path d="M8.500 4.500v8M4.500 8.500h8" stroke="#666" strokeWidth="1.500" />
        </svg>
      </div>
      <div className="ml-[126px] mt-[9px] flex flex-col gap-[2px]">
        <div className="h-[2px] w-[2px] bg-[#a6a6a6]" />
        <div className="h-[2px] w-[2px] bg-[#a6a6a6]" />
        <div className="h-[2px] w-[2px] bg-[#a6a6a6]" />
      </div>
      <div className="ml-[15px] mt-[7px] flex h-[15px]">
        <div className="flex w-[15px] items-center justify-center border border-[#a6a6a6] bg-white">
          <svg width="4" height="7" viewBox="0 0 4 7"><path d="M4 0v7L0 3.500z" fill="#666" /></svg>
        </div>
        <div className="w-[545px] border-y border-r border-[#a6a6a6] bg-white" />
        <div className="w-[29px]" />
        <div className="flex w-[14px] items-center justify-center border border-[#a6a6a6] bg-white">
          <svg width="4" height="7" viewBox="0 0 4 7"><path d="M0 0v7l4-3.500z" fill="#666" /></svg>
        </div>
      </div>
    </div>
  );
}

function StatusBar() {
  return (
    <div className="flex h-[21px] items-center bg-[#f3f3f3] text-[12px] text-[#444]">
      <span className="ml-[8px]">Ready</span>
      <div className="ml-auto flex h-full items-center">
        <div className="flex h-full w-[38px] items-center justify-center bg-[#c6c6c6]">
          <svg width="14" height="14" viewBox="0 0 14 14">
            <path d="M.5.5h13v13H.5zM.5 4.800h13M.5 9.200h13M4.800.5v13M9.200.5v13" fill="none" stroke="#666" />
          </svg>
        </div>
        <div className="flex w-[38px] justify-center">
          <svg width="14" height="14" viewBox="0 0 14 14">
            <path d="M.5.5h13v13H.5zM3.500 3.500h7v7h-7zM5 5.500h4M5 7.500h4" fill="none" stroke="#666" />
          </svg>
        </div>
        <div className="flex w-[38px] justify-center">
          <svg width="14" height="14" viewBox="0 0 14 14">
            <path d="M.5.5h13v13H.5zM.5 9.500h13M4 .5v9M10 .5v9" fill="none" stroke="#666" />
          </svg>
        </div>
        <div className="ml-[6px] h-[2px] w-[6px] bg-[#666]" />
        <div className="relative ml-[4px] h-px w-[99px] bg-[#a6a6a6]">
          <div className="absolute left-[48px] top-[-6px] h-[13px] w-[5px] bg-[#666]" />
        </div>
        <svg width="8" height="8" viewBox="0 0 8 8" className="ml-[3px]">
          <path d="M4 0v8M0 4h8" stroke="#666" strokeWidth="1.500" />
        </svg>
        <span className="ml-[9px] mr-[6px] text-[12px]">100%</span>
      </div>
    </div>
  );
}

export default function App() {
  return (
    <div className="relative flex h-[900px] w-[1600px] flex-col overflow-hidden bg-white font-['Open_Sans',sans-serif]">
      <TitleBar />
      <TabBar />
      <Ribbon />
      <FormulaBar />
      <Sheet />
      <SheetTabs />
      <StatusBar />
      <div className="h-[2px] bg-[#333]" />
      <QuickLayoutMenu />
    </div>
  );
}
